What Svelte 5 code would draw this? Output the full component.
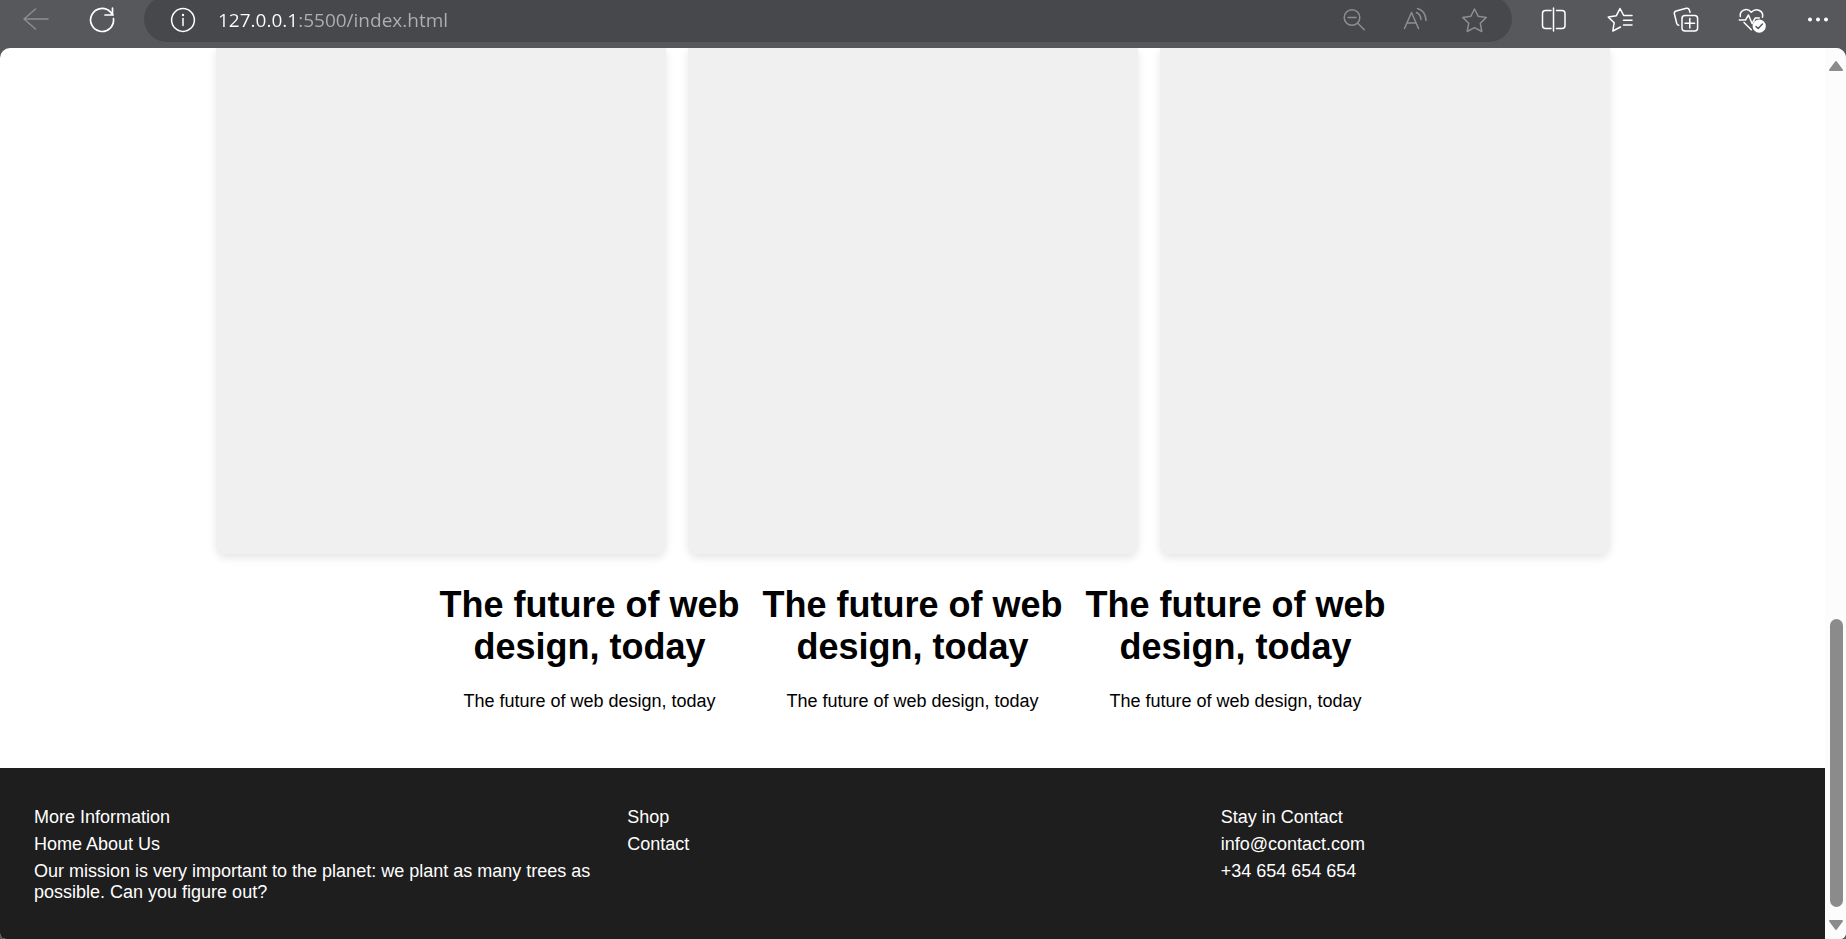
<script>
  const cards = [1, 2, 3];
  const features = [
    { title: 'The future of web design, today', text: 'The future of web design, today' },
    { title: 'The future of web design, today', text: 'The future of web design, today' },
    { title: 'The future of web design, today', text: 'The future of web design, today' }
  ];
  let address = $state('127.0.0.1:5500/index.html');
</script>

<div class="browser">
  <header class="toolbar">
    <div class="group">
      <button class="dim" aria-label="Back">
        <svg viewBox="0 0 32 32"><path d="M28 16H4M15.5 6 4 16l11.5 10" /></svg>
      </button>
      <button aria-label="Refresh">
        <svg viewBox="0 0 32 32" class="bold"><path d="M27.5 15.5A11.5 11.5 0 1 1 24.3 8.9L27 12M26.5 5v7H19" /></svg>
      </button>
    </div>

    <div class="address">
      <button aria-label="Site information">
        <svg viewBox="0 0 32 32"><circle cx="16" cy="17" r="11.4" /><path d="M16 15.5v7" /><circle class="dot" cx="16" cy="12" r="1.2" /></svg>
      </button>
      <input type="text" aria-label="Address" bind:value={address} spellcheck="false" />
      <div class="actions dim">
        <button aria-label="Zoom out">
          <svg viewBox="0 0 32 32"><circle cx="14" cy="14.5" r="7.8" /><path d="M10 14.5h8M19.7 20.2l6.6 6.6" /></svg>
        </button>
        <button aria-label="Read aloud">
          <svg viewBox="0 0 32 32"><path d="M6.5 25.5 13.5 9.5l7 16M8.8 20h9.4M18.5 9.5c2.6 1.2 4.3 3.8 4.5 7M19.5 5.5c5 1.4 8.3 6 8.5 12" /></svg>
        </button>
        <button aria-label="Add to favorites">
          <svg viewBox="0 0 32 32"><path d="M16.5 6l3.6 7.2 8.2 1.2-6 5.9 1.5 8.2-7.3-3.9-7.3 3.9 1.5-8.2-6-5.9 8.2-1.2z" /></svg>
        </button>
      </div>
    </div>

    <div class="group">
      <button aria-label="Split screen">
        <svg viewBox="0 0 32 32"><path d="M13 7.5H7.5a3 3 0 0 0-3 3v12a3 3 0 0 0 3 3H13M18.5 7.5H24a3 3 0 0 1 3 3v12a3 3 0 0 1-3 3h-5.5M15.5 5v23" /></svg>
      </button>
      <button aria-label="Favorites">
        <svg viewBox="0 0 32 32"><path d="M28 12.5h-8.3L16 5.5l-3.6 7.2-8.1 1.4 5.9 5.6L8.8 28l7.7-4M19.5 17.3H28M19.5 22H28" /></svg>
      </button>
      <button aria-label="Collections">
        <svg viewBox="0 0 32 32"><rect x="12" y="12.5" width="15.6" height="15.6" rx="3" /><path d="M19.8 15.5v9.6M15 20.3h9.6M20 9.3l-.7-2.2a2.5 2.5 0 0 0-3-1.8L6.2 8a2.5 2.5 0 0 0-1.8 3l2.3 9.3q.5 1.8 2 2" /></svg>
      </button>
      <button aria-label="Browser essentials">
        <svg viewBox="0 0 32 32">
          <path d="M4.3 13.5c-1-6 6.4-9.6 11-4.3 5.2-5.3 12.6-1 11.2 5M3.3 17h6.2l3-5 3.6 8.5 3.2-5.5h4M8 19.5l7.3 7.3" />
          <circle class="dot" cx="23.2" cy="23.2" r="6.6" />
          <path class="check" d="M20 23.5l2.2 2 4.2-4.5" />
        </svg>
      </button>
      <button aria-label="Settings and more">
        <svg viewBox="0 0 32 32"><circle class="dot" cx="8" cy="16.5" r="2" /><circle class="dot" cx="16" cy="16.5" r="2" /><circle class="dot" cx="24" cy="16.5" r="2" /></svg>
      </button>
    </div>
  </header>

  <div class="viewport">
    <div class="page">
      <main>
        <section class="cards">
          {#each cards as card (card)}
            <article class="card"></article>
          {/each}
        </section>
        <section class="features">
          {#each features as feature}
            <article class="feature">
              <h2>{feature.title}</h2>
              <p>{feature.text}</p>
            </article>
          {/each}
        </section>
      </main>

      <footer>
        <ul>
          <li>More Information</li>
          <li><a href="#home">Home</a> <a href="#about">About Us</a></li>
          <li>Our mission is very important to the planet: we plant as many trees as possible. Can you figure out?</li>
        </ul>
        <ul>
          <li><a href="#shop">Shop</a></li>
          <li><a href="#contact">Contact</a></li>
        </ul>
        <ul>
          <li>Stay in Contact</li>
          <li><a href="mailto:info@contact.com">info@contact.com</a></li>
          <li><a href="tel:+34654654654">+34 654 654 654</a></li>
        </ul>
      </footer>
    </div>

    <div class="scrollbar" aria-hidden="true">
      <svg viewBox="0 0 16 12"><path d="M8 2 14 10H2z" /></svg>
      <div class="track"><div class="thumb"></div></div>
      <svg viewBox="0 0 16 12"><path d="M8 10 14 2H2z" /></svg>
    </div>
  </div>
</div>

<style>
  :global(body) {
    margin: 0;
    background: #57585c;
  }

  .browser {
    display: flex;
    flex-direction: column;
    min-height: 100vh;
    overflow: hidden;
    font-family: 'Liberation Sans', Arial, sans-serif;
    font-size: 18px;
    line-height: 21px;
  }

  .toolbar {
    display: flex;
    align-items: center;
    gap: 26px;
    height: 38px;
    padding: 0 12px 10px 20px;
    background: #57585c;
    color: #fff;
  }

  .group {
    display: flex;
    gap: 34px;
  }

  .address {
    display: flex;
    flex: 1;
    align-items: center;
    min-width: 0;
    height: 46px;
    padding: 0 22px 0 23px;
    border-radius: 23px;
    background: #47484b;
  }

  .address input {
    flex: 1;
    min-width: 0;
    margin: 0 28px 0 18px;
    padding: 1px 0 0 1px;
    border: 0;
    outline: 0;
    background: linear-gradient(90deg, #fff 81px, #b0b0b2 81px);
    background-clip: text;
    -webkit-text-fill-color: transparent;
    font-family: 'Open Sans', 'Noto Sans', sans-serif;
    font-size: 19px;
    line-height: 28px;
  }

  .actions {
    display: flex;
    gap: 28px;
  }

  button {
    display: block;
    flex: none;
    width: 32px;
    height: 32px;
    padding: 0;
    border: 0;
    background: none;
    color: inherit;
  }

  .dim {
    color: #8e8e90;
  }

  button svg {
    display: block;
    width: 32px;
    height: 32px;
    fill: none;
    stroke: currentColor;
    stroke-width: 1.5;
    stroke-linecap: round;
    stroke-linejoin: round;
  }

  button svg.bold {
    stroke-width: 1.7;
  }

  button .dot {
    fill: currentColor;
    stroke: none;
  }

  button .check {
    stroke: #57585c;
  }

  .viewport {
    display: flex;
    flex: 1;
    overflow: hidden;
    border-radius: 10px 10px 6px 6px;
    background: #fff;
  }

  .page {
    display: flex;
    flex: 1;
    flex-direction: column;
    min-width: 0;
  }

  main {
    display: flex;
    flex: 1;
    flex-direction: column;
    padding-bottom: 56px;
    color: #000;
  }

  .cards {
    display: flex;
    flex: 1;
    justify-content: center;
    gap: 22px;
  }

  .card {
    width: 450px;
    min-height: 200px;
    border-radius: 0 0 11px 11px;
    background: #f0f0f0;
    box-shadow: 0 4px 9px rgba(0, 0, 0, 0.1);
  }

  .features {
    display: flex;
    justify-content: center;
    gap: 22px;
    padding-top: 30px;
    text-align: center;
  }

  .feature {
    width: 301px;
  }

  h2 {
    margin: 0 0 23px;
    font-size: 36px;
    line-height: 42px;
  }

  p {
    margin: 0;
  }

  footer {
    display: grid;
    grid-template-columns: repeat(3, 1fr);
    gap: 23px;
    padding: 39px 34px 36px;
    background: #1e1e1e;
    color: #fff;
  }

  ul {
    display: flex;
    flex-direction: column;
    gap: 6px;
    margin: 0;
    padding: 0;
    list-style: none;
  }

  footer a {
    color: inherit;
    text-decoration: none;
  }

  .scrollbar {
    display: flex;
    flex-direction: column;
    align-items: center;
    width: 21px;
    padding: 12px 0 8px 1px;
    box-sizing: border-box;
    gap: 12px;
    background: #fcfcfc;
  }

  .scrollbar svg {
    width: 16px;
    height: 12px;
    fill: #8b8b8b;
    stroke: #8b8b8b;
    stroke-width: 2;
    stroke-linejoin: round;
  }

  .track {
    display: flex;
    flex: 1;
    flex-direction: column;
    justify-content: flex-end;
    width: 13px;
  }

  .thumb {
    height: 35%;
    border-radius: 7px;
    background: #8b8b8b;
  }
</style>
